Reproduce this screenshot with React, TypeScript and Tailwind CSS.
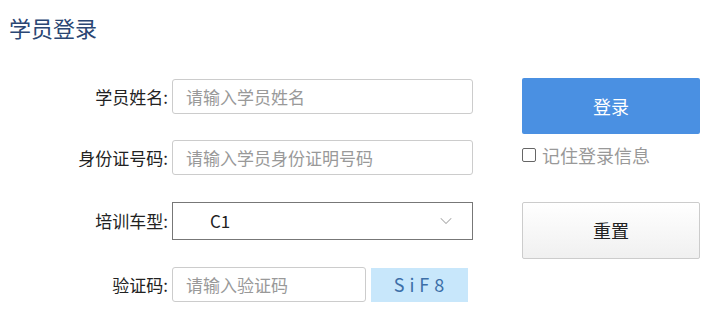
import { ChevronDown } from 'lucide-react';

const font = { fontFamily: '"Noto Sans CJK SC", "Noto Sans", sans-serif' };

function Label({ children }: { children: React.ReactNode }) {
  return (
    <label className="w-[172px] shrink-0 text-right text-[17px] text-[#222] pr-[4px]">{children}</label>
  );
}

export default function App() {
  return (
    <div className="w-[715px] h-[334px] bg-white overflow-hidden" style={font}>
      <h1 className="pl-[9px] pt-[12px] text-[22px] leading-[30px] text-[#2a4673] font-normal">学员登录</h1>

      <div className="flex mt-[37px]">
        {/* form fields */}
        <div className="flex flex-col w-[522px]">
          <div className="flex items-center h-[35px]">
            <Label>学员姓名:</Label>
            <input
              className="w-[301px] h-[35px] border border-[#ccc] rounded-[3px] px-[13px] text-[17px] outline-none placeholder:text-[#999]"
              placeholder="请输入学员姓名"
            />
          </div>
          <div className="flex items-center h-[35px] mt-[26px]">
            <Label>身份证号码:</Label>
            <input
              className="w-[301px] h-[35px] border border-[#ccc] rounded-[3px] px-[13px] text-[17px] outline-none placeholder:text-[#999]"
              placeholder="请输入学员身份证明号码"
            />
          </div>
          <div className="flex items-center h-[38px] mt-[27px]">
            <Label>培训车型:</Label>
            <div className="w-[301px] h-[38px] border border-[#777] flex items-center justify-between pl-[37px] pr-[16px] text-[17px] text-[#222]">
              <span>C1</span>
              <ChevronDown size={20} strokeWidth={1.25} className="text-[#aaa]" />
            </div>
          </div>
          <div className="flex items-center h-[35px] mt-[27px]">
            <Label>验证码:</Label>
            <input
              className="w-[194px] h-[35px] border border-[#ccc] rounded-[3px] px-[13px] text-[17px] outline-none placeholder:text-[#999]"
              placeholder="请输入验证码"
            />
            <div className="ml-[5px] w-[97px] h-[34px] bg-[#c8e7fb] flex items-center justify-center text-[18px] tracking-[5px] text-[#3c6fa8] pl-[4px]">
              SiF8
            </div>
          </div>
        </div>

        {/* buttons */}
        <div className="flex flex-col w-[178px] -mt-[1px]">
          <button className="h-[56px] w-full bg-[#4a90e2] rounded-[2px] text-white text-[18px]">登录</button>
          <label className="flex items-center gap-[6px] mt-[9px] h-[24px] text-[18px] text-[#999]">
            <span className="w-[14px] h-[14px] border border-[#666] rounded-[2px] bg-white" />
            记住登录信息
          </label>
          <button className="mt-[35px] h-[57px] w-full rounded-[2px] border border-[#ccc] bg-gradient-to-b from-white to-[#f0f0f0] text-[18px] text-[#222]">
            重置
          </button>
        </div>
      </div>
    </div>
  );
}
